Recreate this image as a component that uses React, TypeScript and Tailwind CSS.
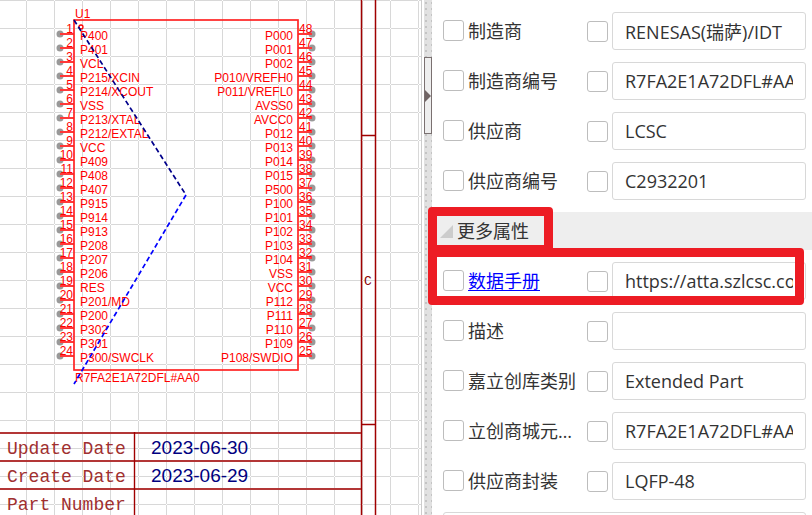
import { useId, useState } from "react";

const leftPins = [
  "P400", "P401", "VCL", "P215/XCIN", "P214/XCOUT", "VSS", "P213/XTAL", "P212/EXTAL",
  "VCC", "P409", "P408", "P407", "P915", "P914", "P913", "P208",
  "P207", "P206", "RES", "P201/MD", "P200", "P302", "P301", "P300/SWCLK",
];

const rightPins = [
  "P000", "P001", "P002", "P010/VREFH0", "P011/VREFL0", "AVSS0", "AVCC0", "P012",
  "P013", "P014", "P015", "P500", "P100", "P101", "P102", "P103",
  "P104", "VSS", "VCC", "P112", "P111", "P110", "P109", "P108/SWDIO",
];

const titleRows = [
  { label: "Update Date", value: "2023-06-30" },
  { label: "Create Date", value: "2023-06-29" },
  { label: "Part Number", value: "" },
];

function Schematic() {
  return (
    <svg
      className="block h-full w-full"
      role="img"
      aria-label="R7FA2E1A72DFL#AA0"
      fontFamily='"Liberation Sans", Arial, sans-serif'
    >
      <defs>
        <pattern id="grid" x="26" y="0" width="28" height="28" patternUnits="userSpaceOnUse">
          <rect width="1" height="28" fill="#d8d8d8" />
          <rect width="28" height="1" fill="#d8d8d8" />
          <rect width="1" height="1" fill="#ffffff" />
        </pattern>
      </defs>
      <rect width="100%" height="100%" fill="url(#grid)" />

      <g stroke="#a00000" fill="none">
        <path d="M361.5 0V2000M375.5 0V2000" strokeWidth="1.5" />
        <path d="M361 135.5H375M361 424.5H375" strokeWidth="1.4" />
        <path d="M0 433H361M0 461H361M0 489H361M0 517H361" strokeWidth="2" stroke="#b33636" />
        <path d="M134.5 432V600" strokeWidth="1.4" />
      </g>
      <text x="364" y="285" fontSize="13" fill="#8b0000" fontFamily='"Liberation Mono", monospace'>C</text>

      {titleRows.map((row, i) => (
        <g key={row.label}>
          <text x="7" y={454 + i * 28} fontSize="18" fill="#a03030" fontFamily='"Liberation Mono", monospace'>
            {row.label}
          </text>
          <text x="151" y={454 + i * 28} fontSize="19" fill="#000080">{row.value}</text>
        </g>
      ))}

      {leftPins.map((name, i) => {
        const y = 34 + i * 14;
        return (
          <g key={i} fill="#ff0000" fontSize="12">
            <circle cx="60" cy={y} r="3.5" fill="#999999" />
            <path d={`M60 ${y}H74`} stroke="#ff3838" strokeWidth="2" />
            <text x="73" y={y - 1} textAnchor="end">{i + 1}</text>
            <text x="80" y={y + 6}>{name}</text>
          </g>
        );
      })}
      {rightPins.map((name, i) => {
        const y = 34 + i * 14;
        return (
          <g key={i} fill="#ff0000" fontSize="12">
            <circle cx="312" cy={y} r="3.5" fill="#999999" />
            <path d={`M298 ${y}H312`} stroke="#ff3838" strokeWidth="2" />
            <text x="299" y={y - 1}>{48 - i}</text>
            <text x="293" y={y + 6} textAnchor="end">{name}</text>
          </g>
        );
      })}
      <rect x="74" y="20" width="224" height="350" fill="none" stroke="#ff2424" strokeWidth="1.7" />
      <circle cx="81" cy="27" r="2" fill="none" stroke="#ff0000" strokeWidth="1.3" />
      <text x="75" y="18" fontSize="12" fill="#ff0000">U1</text>
      <text x="75" y="382" fontSize="12" fill="#ff0000">R7FA2E1A72DFL#AA0</text>
      <path d="M74 20L186 195" stroke="#00008b" strokeWidth="1.7" strokeDasharray="5 3" />
      <path d="M186 195L74 384" stroke="#0000ff" strokeWidth="1.7" strokeDasharray="5 3" />
    </svg>
  );
}

function Splitter() {
  return (
    <div className="relative w-2 shrink-0 bg-[#e1e1e1]">
      <svg className="block h-full w-full" aria-hidden="true">
        <defs>
          <pattern id="dots" x="0" y="0" width="6" height="6" patternUnits="userSpaceOnUse">
            <rect x="1" y="2" width="2" height="2" fill="#c4c4c4" />
          </pattern>
        </defs>
        <rect width="100%" height="100%" fill="url(#dots)" />
      </svg>
      <button
        type="button"
        aria-label="收起面板"
        className="absolute left-0 top-[57px] flex h-[77px] w-2 items-center border border-[#7a7070] bg-[#eeeeee]"
      >
        <svg className="h-3 w-1.5 shrink-0" viewBox="0 0 6 12" aria-hidden="true">
          <path d="M0 0L6 6L0 12Z" fill="#706464" />
        </svg>
      </button>
    </div>
  );
}

const tick =
  "size-[21px] shrink-0 appearance-none rounded-[3px] border border-[#bdbdbd] bg-white checked:bg-[#5588ff]";

function Property({ label, value, href }: { label: string; value: string; href?: string }) {
  const id = useId();
  const [text, setText] = useState(value);
  return (
    <div className="flex h-[50px] items-center pl-[11px] pr-[6px]">
      <input type="checkbox" className={`${tick} mb-0.5`} aria-label={label} />
      <div className="w-[123px] shrink-0 whitespace-nowrap pl-1">
        {href ? (
          <a href={href} className="text-[#0000ff] underline underline-offset-2">{label}</a>
        ) : (
          <label htmlFor={id}>{label}</label>
        )}
      </div>
      <input type="checkbox" className={tick} aria-label={`${label} 显示`} />
      <input
        id={id}
        type="text"
        aria-label={label}
        value={text}
        onChange={(e) => setText(e.target.value)}
        className="ml-1 h-[38px] min-w-0 flex-1 rounded-[3px] border border-[#d8d8d8] bg-white px-3"
      />
    </div>
  );
}

export default function App() {
  return (
    <div className="flex h-screen overflow-hidden bg-white font-['Open_Sans','Noto_Sans_CJK_SC',sans-serif] text-[18px] text-[#333333]">
      <main className="mr-0.5 min-w-0 flex-1 border-r border-[#cccccc]">
        <Schematic />
      </main>
      <Splitter />
      <aside className="relative w-[380px] shrink-0 pt-[6px]">
        <Property label="制造商" value="RENESAS(瑞萨)/IDT" />
        <Property label="制造商编号" value="R7FA2E1A72DFL#AA0" />
        <Property label="供应商" value="LCSC" />
        <Property label="供应商编号" value="C2932201" />
        <h2 className="mt-[6px] flex h-[38px] items-center gap-1 bg-[#eeeeee] pl-2">
          <svg className="size-[13px]" viewBox="0 0 13 13" aria-hidden="true">
            <path d="M13 0V13H0Z" fill="#cccccc" />
          </svg>
          更多属性
        </h2>
        <div className="mt-[6px]">
          <Property label="数据手册" value="https://atta.szlcsc.com/upload" href="#datasheet" />
          <Property label="描述" value="" />
          <Property label="嘉立创库类别" value="Extended Part" />
          <Property label="立创商城元…" value="R7FA2E1A72DFL#AA0" />
          <Property label="供应商封装" value="LQFP-48" />
        </div>
        <div className="ml-[11px] mr-[6px] mt-[6px] h-[38px] rounded-[3px] border border-[#d8d8d8]" />
        <div className="pointer-events-none absolute -left-1 top-[207px] h-[47px] w-[125px] rounded-[4px] border-[9px] border-[#ed1c24]" />
        <div className="pointer-events-none absolute -left-1 top-[248px] h-[57px] w-[376px] rounded-[4px] border-[9px] border-[#ed1c24]" />
      </aside>
    </div>
  );
}
